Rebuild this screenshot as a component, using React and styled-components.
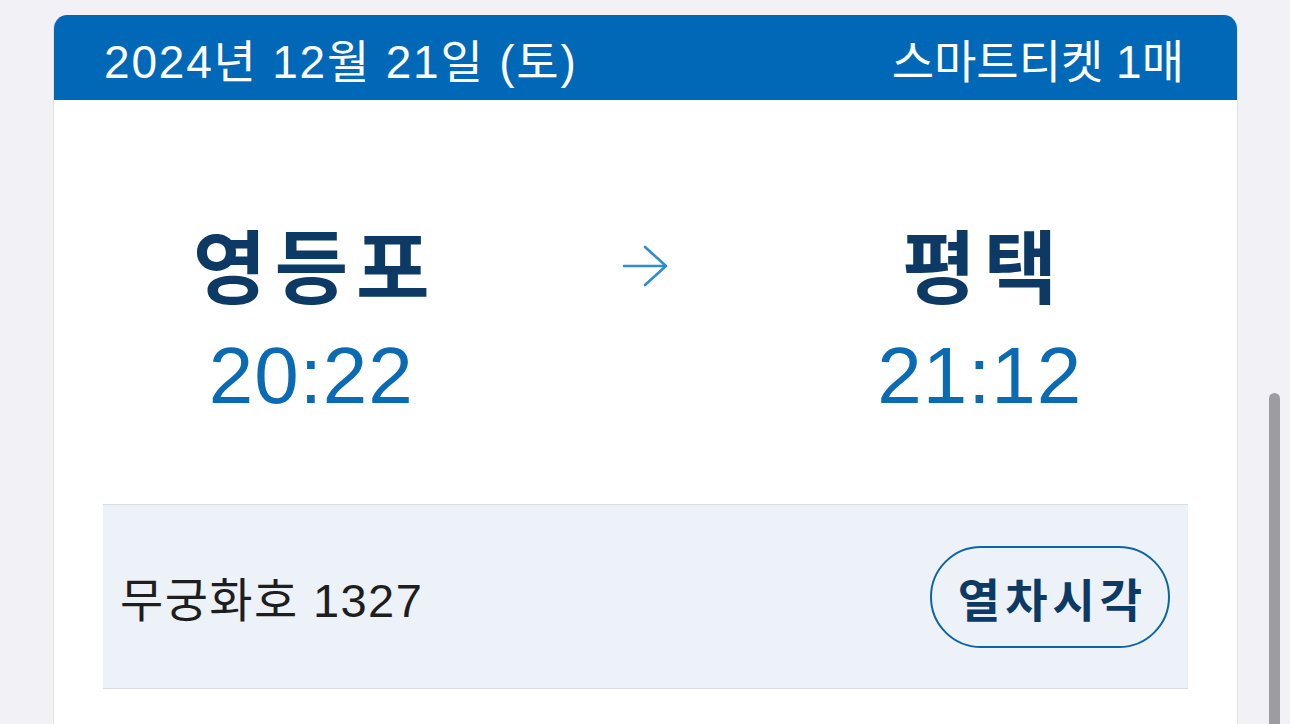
import React from 'react';
import styled, { createGlobalStyle } from 'styled-components';

const GlobalStyle = createGlobalStyle`
  html, body {
    margin: 0;
    padding: 0;
    background: #f2f1f6;
    overflow: hidden;
  }
  body {
    font-family: "Liberation Sans", "Noto Sans CJK KR", sans-serif;
  }
`;

const ticket = {
  date: '2024년 12월 21일 (토)',
  kind: '스마트티켓 1매',
  from: { name: '영등포', time: '20:22' },
  to: { name: '평택', time: '21:12' },
  train: '무궁화호 1327',
};

const Page = styled.div`
  position: relative;
  height: 724px;
  padding: 15px 52px 0 53px;
  box-sizing: border-box;
`;

const Card = styled.div`
  background: #fff;
  border-radius: 14px 14px 0 0;
  border-left: 1px solid #dfdfe4;
  border-right: 1px solid #dfdfe4;
  overflow: hidden;
  height: 709px;
`;

const Header = styled.div`
  display: flex;
  justify-content: space-between;
  align-items: center;
  height: 85px;
  padding: 0 53px 0 50px;
  background: #0068b7;
  color: #fff;
  font-size: 46px;
`;

const HeaderText = styled.span`
  letter-spacing: ${(p) => p.$spacing || 0}px;
`;

const Body = styled.div`
  padding: 0 49px;
`;

const Route = styled.div`
  display: grid;
  grid-template-columns: 1fr 252px 1fr;
  align-items: start;
  height: 404px;
  padding-top: 110px;
  box-sizing: border-box;
`;

const Station = styled.div`
  display: flex;
  flex-direction: column;
  align-items: center;
`;

const StationName = styled.div`
  font-family: "Noto Sans CJK KR", sans-serif;
  font-weight: 700;
  font-size: 80px;
  line-height: 104px;
  letter-spacing: 8px;
  margin-right: -8px;
  color: #0c3a64;
`;

const Time = styled.div`
  font-size: 80px;
  line-height: 96px;
  letter-spacing: 1px;
  color: #0a6ab4;
  margin-top: 14px;
`;

const ArrowCell = styled.div`
  display: flex;
  justify-content: center;
  padding-top: 35px;
`;

const TrainRow = styled.div`
  display: flex;
  justify-content: space-between;
  align-items: center;
  height: 183px;
  padding: 0 18px 0 17px;
  background: #edf1f8;
  border-top: 1px solid #d8dce2;
  border-bottom: 1px solid #d8dce2;
`;

const TrainName = styled.div`
  font-size: 47px;
  letter-spacing: 1.4px;
  color: #1e1e1e;
`;

const TimetableButton = styled.button`
  width: 240px;
  height: 102px;
  border: 2.5px solid #0a66a6;
  border-radius: 51px;
  background: transparent;
  font-family: "Noto Sans CJK KR", sans-serif;
  font-weight: 700;
  font-size: 46px;
  letter-spacing: 5px;
  color: #0c3a64;
  padding: 0 0 0 5px;
  cursor: pointer;
`;

const ScrollThumb = styled.div`
  position: absolute;
  left: 1269px;
  top: 393px;
  width: 11px;
  height: 340px;
  border-radius: 6px;
  background: #9d9ca2;
`;

const Arrow = () => (
  <svg width="48" height="42" viewBox="0 0 48 42" fill="none">
    <path
      d="M2 21H44M23 2L44 21L23 40"
      stroke="#2c8ed0"
      strokeWidth="2.6"
      strokeLinecap="round"
      strokeLinejoin="round"
    />
  </svg>
);

const StationBlock = ({ name, time }) => (
  <Station>
    <StationName>{name}</StationName>
    <Time>{time}</Time>
  </Station>
);

const App = () => (
  <Page>
    <GlobalStyle />
    <Card>
      <Header>
        <HeaderText $spacing={1.8}>{ticket.date}</HeaderText>
        <HeaderText>{ticket.kind}</HeaderText>
      </Header>
      <Body>
        <Route>
          <StationBlock {...ticket.from} />
          <ArrowCell>
            <Arrow />
          </ArrowCell>
          <StationBlock {...ticket.to} />
        </Route>
        <TrainRow>
          <TrainName>{ticket.train}</TrainName>
          <TimetableButton>열차시각</TimetableButton>
        </TrainRow>
      </Body>
    </Card>
    <ScrollThumb />
  </Page>
);

export default App;
